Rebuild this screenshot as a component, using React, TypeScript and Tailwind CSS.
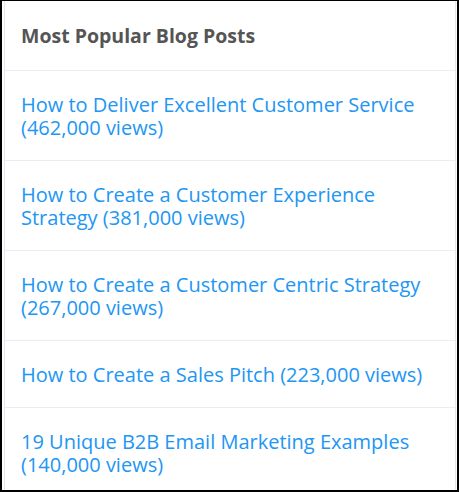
const posts = [
  "How to Deliver Excellent Customer Service (462,000 views)",
  "How to Create a Customer Experience Strategy (381,000 views)",
  "How to Create a Customer Centric Strategy (267,000 views)",
  "How to Create a Sales Pitch (223,000 views)",
  "19 Unique B2B Email Marketing Examples (140,000 views)",
];

export default function App() {
  return (
    <div className="w-[459px] h-[492px] bg-white border-2 border-t border-black overflow-hidden font-['Open_Sans',sans-serif]">
      <div className="h-full ml-[2px] mr-px border-x border-[#e6e6ee] bg-white">
        <div className="pl-[16px] pr-[6px] h-[70px] flex items-center border-b border-[#ececf2]">
          <h2 className="text-[19.5px] font-bold text-[#555555]">Most Popular Blog Posts</h2>
        </div>
        {posts.map((p) => (
          <div key={p} className="pl-[16px] pr-[6px] pt-[22px] pb-[21px] border-b border-[#ececf2] last:border-b-0">
            <a href="#" className="block text-[20px] leading-[23px] text-[#2196f3]">
              {p}
            </a>
          </div>
        ))}
      </div>
    </div>
  );
}
